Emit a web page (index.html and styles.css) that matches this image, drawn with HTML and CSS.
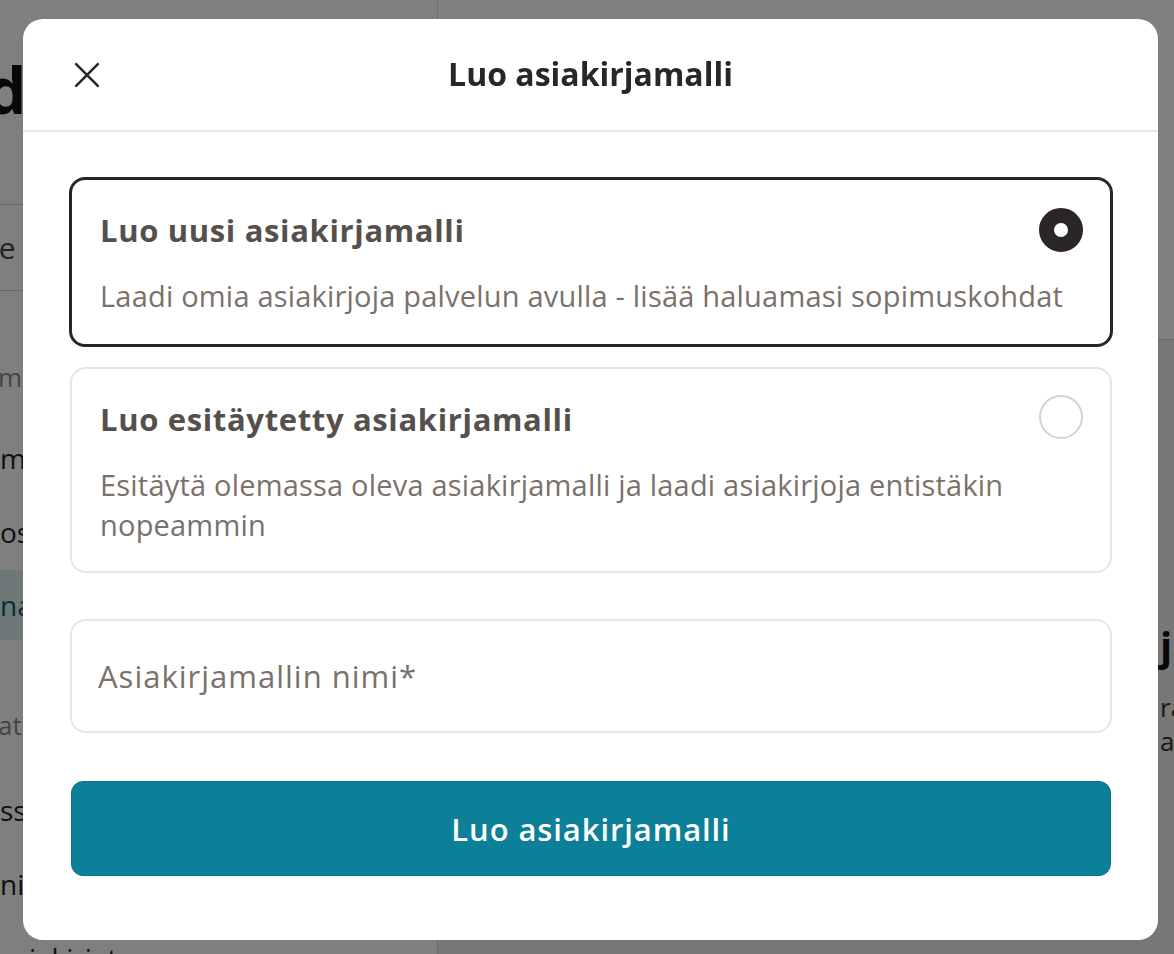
FILE: index.html
```html
<!DOCTYPE html>
<html lang="fi">
<head>
<meta charset="utf-8">
<title>Luo asiakirjamalli</title>
<link rel="stylesheet" href="styles.css">
</head>
<body>
<div class="page">
  <aside class="sidebar">
    <div class="logo">docue</div>
    <div class="search">Hae</div>
    <nav class="nav">
      <div class="nav-label">merkityt</div>
      <div class="nav-item">meidän</div>
      <div class="nav-item">osapuolet</div>
      <div class="nav-item active">nakymät</div>
      <div class="nav-label second">athallinta</div>
      <div class="nav-item">ssuunnitelmat</div>
      <div class="nav-item">ninnointi</div>
      <div class="nav-item">asiakirjat</div>
    </nav>
  </aside>
  <main class="main">
    <div class="main-top"></div>
    <div class="main-body">
      <h2 class="main-title">ja</h2>
      <p class="main-text">ra</p>
      <p class="main-text">all</p>
    </div>
  </main>
</div>

<div class="backdrop">
  <div class="modal" role="dialog" aria-labelledby="modal-title">
    <header class="modal-header">
      <button class="close" aria-label="Sulje">
        <svg viewBox="0 0 24 24" width="26" height="26" aria-hidden="true">
          <path d="M2 2 L22 22 M22 2 L2 22" stroke="#2b2626" stroke-width="2.4" stroke-linecap="round" fill="none"/>
        </svg>
      </button>
      <h1 id="modal-title" class="modal-title">Luo asiakirjamalli</h1>
    </header>
    <div class="modal-body">
      <div class="option selected">
        <div class="option-head">
          <div class="option-title">Luo uusi asiakirjamalli</div>
          <span class="radio checked"></span>
        </div>
        <div class="option-desc">Laadi omia asiakirjoja palvelun avulla - lisää haluamasi sopimuskohdat</div>
      </div>
      <div class="option">
        <div class="option-head">
          <div class="option-title">Luo esitäytetty asiakirjamalli</div>
          <span class="radio"></span>
        </div>
        <div class="option-desc">Esitäytä olemassa oleva asiakirjamalli ja laadi asiakirjoja entistäkin nopeammin</div>
      </div>
      <div class="field">
        <input class="input" type="text" placeholder="Asiakirjamallin nimi*">
      </div>
      <button class="submit">Luo asiakirjamalli</button>
    </div>
  </div>
</div>
</body>
</html>
```

FILE: styles.css
```css
* { box-sizing: border-box; }

html, body {
  margin: 0;
  padding: 0;
  height: 100%;
}

body {
  font-family: "Open Sans", "Liberation Sans", sans-serif;
  background: #ffffff;
  overflow: hidden;
}

/* ---------- background page ---------- */
.page {
  display: flex;
  height: 954px;
  overflow: hidden;
}

.sidebar {
  flex: none;
  width: 438px;
  border-right: 1px solid #d8d8d8;
  display: flex;
  flex-direction: column;
  background: #ffffff;
  overflow: hidden;
}

.sidebar > * {
  flex-shrink: 0;
}

.logo {
  height: 205px;
  padding-top: 58px;
  margin-left: -14px;
  font-size: 64px;
  font-weight: 700;
  color: #111;
  letter-spacing: -1px;
  line-height: 1;
  border-bottom: 1px solid #cfcfcf;
}

.search {
  height: 86px;
  display: flex;
  align-items: center;
  margin-left: -40px;
  font-size: 30px;
  color: #444;
  border-bottom: 1px solid #cfcfcf;
}

.nav {
  display: flex;
  flex-direction: column;
  padding-top: 64px;
  background: #fff;
}

.nav > * {
  flex-shrink: 0;
}

.nav-label {
  height: 44px;
  line-height: 44px;
  font-size: 26px;
  color: #8a8a8a;
  margin: 0 0 22px -2px;
}

.nav-label.second {
  margin: 62px 0 26px -2px;
}

.nav-item {
  height: 74px;
  display: flex;
  align-items: center;
  font-size: 28px;
  color: #222;
}

.nav-item.active {
  background: #e0eef0;
  color: #0b5f6c;
  height: 70px;
  margin: 1px 0;
}

.main {
  flex: 1;
  display: flex;
  flex-direction: column;
  background: #f1efed;
}

.main-top {
  flex: none;
  height: 340px;
  border-bottom: 1px solid #d0d0d0;
  background: #fff;
}

.main-body {
  padding: 282px 0 0 722px;
}

.main-title {
  margin: 0 0 20px;
  font-size: 40px;
  line-height: 48px;
  color: #111;
  white-space: nowrap;
}

.main-text {
  margin: 0;
  font-size: 26px;
  line-height: 34px;
  color: #333;
  white-space: nowrap;
}

/* ---------- overlay / modal ---------- */
.backdrop {
  position: fixed;
  inset: 0;
  background: rgba(0, 0, 0, 0.5);
}

.modal {
  position: absolute;
  left: 23px;
  top: 19px;
  width: 1135px;
  height: 921px;
  background: #ffffff;
  border-radius: 20px;
  display: flex;
  flex-direction: column;
}

.modal-header {
  flex: none;
  height: 113px;
  border-bottom: 2px solid #e6e6e6;
  display: flex;
  align-items: center;
  justify-content: center;
  position: relative;
}

.close {
  position: absolute;
  left: 51px;
  top: 43px;
  width: 26px;
  height: 26px;
  padding: 0;
  border: 0;
  background: transparent;
  display: flex;
}

.modal-title {
  margin: 0;
  font-size: 32px;
  line-height: 44px;
  font-weight: 700;
  color: #2b2626;
  padding-bottom: 2px;
}

.modal-body {
  padding: 45px 46px 0 47px;
  display: flex;
  flex-direction: column;
}

.option {
  display: flex;
  flex-direction: column;
  gap: 24px;
  border: 2px solid #e5e5e5;
  border-radius: 16px;
  padding: 28px 27px 26px 28px;
  margin-bottom: 46px;
}

.option.selected {
  border: 3px solid #2a2626;
  margin: 0 -1px 20px;
  padding-bottom: 28px;
}

.option-head {
  display: flex;
  align-items: center;
  justify-content: space-between;
  gap: 20px;
  height: 44px;
}

.option-title {
  font-size: 31px;
  line-height: 44px;
  font-weight: 700;
  color: #55504c;
  letter-spacing: 0.65px;
}

.option-desc {
  font-size: 29px;
  line-height: 40px;
  color: #7a716b;
  letter-spacing: 0.2px;
}

.radio {
  flex: none;
  width: 44px;
  height: 44px;
  border-radius: 50%;
  border: 2px solid #d6d2cf;
  background: #fff;
}

.option:not(.selected) .radio {
  margin-top: -4px;
}

.radio.checked {
  border: 15px solid #2a2626;
  background: #fff;
}

.field {
  margin-bottom: 47px;
}

.input {
  display: block;
  width: 100%;
  height: 114px;
  border: 2px solid #e5e5e5;
  border-radius: 16px;
  padding: 0 26px;
  font-family: inherit;
  font-size: 31px;
  letter-spacing: 1px;
  color: #2b2626;
  outline: none;
  background: #fff;
}

.input::placeholder {
  color: #7a716b;
}

.submit {
  margin: 1px 1px 0;
  height: 95px;
  border: 1px solid #08748a;
  border-radius: 12px;
  background: #0b8098;
  color: #ffffff;
  font-family: inherit;
  font-size: 31px;
  font-weight: 600;
  letter-spacing: 0.9px;
  cursor: pointer;
}
```
